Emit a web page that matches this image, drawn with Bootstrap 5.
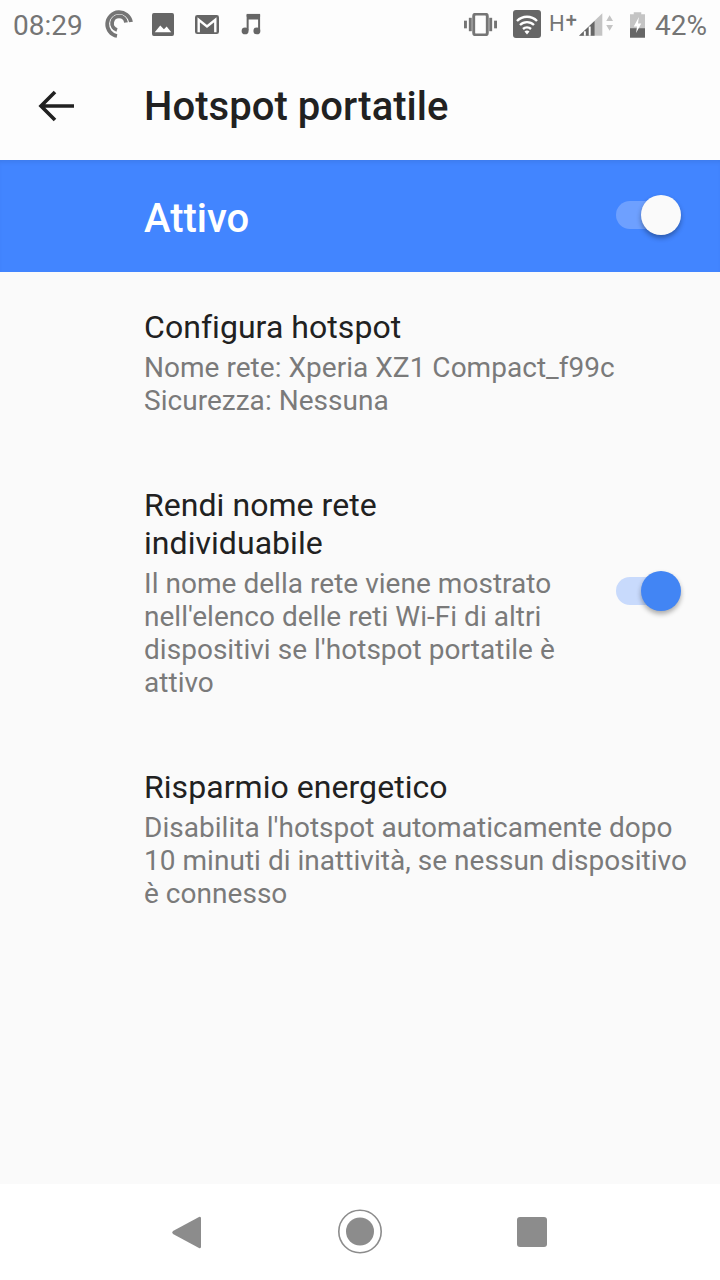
<!DOCTYPE html>
<html lang="it">
<head>
<meta charset="UTF-8">
<meta name="viewport" content="width=device-width, initial-scale=1.0">
<title>Hotspot portatile</title>
<link rel="stylesheet" href="https://cdn.jsdelivr.net/npm/bootstrap@5.3.0/dist/css/bootstrap.min.css">
<style>
body { font-family: Roboto, "Liberation Sans", sans-serif; background: #fafafa; color: #212121; }
.phone { width: 720px; height: 1280px; overflow: hidden; }
.status-bar { height: 52px; background: #fdfdfd; color: #757575; font-size: 28px; padding: 0 13px 4px; }
.status-bar svg { display: block; flex: none; }
.status-text { margin-top: 4px; }
.ic-swirl { margin-left: 22px; }
.ic-image { margin-left: 19px; }
.ic-mail { margin-left: 21px; }
.ic-music { margin-left: 22px; }
.ic-wifi { margin-left: 16px; }
.net-type { margin-left: 8px; font-size: 22px; line-height: 1; width: 25px; }
.net-plus { font-size: 20px; font-weight: 500; position: relative; top: -3px; margin-left: 1px; }
.ic-signal { margin-left: 5px; }
.ic-battery { margin-left: 16px; }
.batt-text { margin-left: 10px; margin-top: 4px; }
.tool-bar { height: 108px; background: #fdfdfd; padding-left: 38px; }
.tool-title { font-size: 40px; font-weight: 500; margin-left: 68px; margin-top: 2px; color: #212121; letter-spacing: .05px; }
.master-bar { height: 112px; background: #4285ff; color: #fff; padding: 0 48px 0 144px; box-shadow: inset 0 4px 4px -2px rgba(0,0,0,.08); }
.master-label { font-size: 40px; font-weight: 500; line-height: 1; margin-top: 6px; }
.switch-track { position: relative; width: 56px; height: 28px; border-radius: 14px; flex: none; }
.switch-thumb { position: absolute; right: -9px; top: -6px; width: 40px; height: 40px; border-radius: 50%; box-shadow: 0 3px 5px rgba(0,0,0,.32); }
.track-on-blue { background: #6ea0ff; margin-top: -1px; margin-bottom: 1px; }
.track-on-light { background: #c8dafc; margin-left: auto; margin-right: 28px; margin-top: -4px; }
.thumb-white { background: #fafafa; }
.thumb-blue { background: #4285f4; }
.pref-list { flex: 1; padding: 36px 20px 0 144px; }
.pref-item { margin-bottom: 69px; }
.pref-text { width: 416px; }
.pref-title { font-size: 32px; line-height: 38px; color: #212121; letter-spacing: .05px; }
.pref-sub { font-size: 28px; line-height: 33px; color: #7a7a7a; margin-top: 5px; letter-spacing: .03px; }
.nav-bottom { height: 96px; background: #fff; }
</style>
</head>
<body>
<div class="phone d-flex flex-column">
  <div class="status-bar d-flex align-items-center">
    <span class="status-text">08:29</span>
    <svg class="ic-swirl" width="28" height="28" viewBox="0 0 28 28" fill="none" stroke="#757575" stroke-width="3.8"><path d="M26 12A12 12 0 1 0 12 26"/><path d="M21 12.5A7 7 0 1 0 12 20"/></svg>
    <svg class="ic-image" width="22" height="23" viewBox="0 0 24 24" preserveAspectRatio="none"><rect width="24" height="24" rx="2" fill="#666"/><path d="M3 20l6-7 4 4 3-3 5 6z" fill="#fff"/></svg>
    <svg class="ic-mail" width="24" height="21" viewBox="0 0 26 22" preserveAspectRatio="none"><rect width="26" height="20" y="1" rx="2.5" fill="#666"/><path d="M4 19V6l9 7 9-7v13" fill="none" stroke="#fff" stroke-width="2.6"/></svg>
    <svg class="ic-music" width="20" height="22" viewBox="0 0 22 24" preserveAspectRatio="none" fill="#666"><circle cx="4.5" cy="19.5" r="3.8"/><circle cx="17.5" cy="19.5" r="3.8"/><path d="M6.2 19V2H21v17h-2.2V7H8.4v12z"/><rect x="6.2" y="1" width="14.8" height="3"/></svg>
    <div class="ms-auto d-flex align-items-center">
      <svg width="33" height="23" viewBox="0 0 34 24" preserveAspectRatio="none" fill="#757575"><rect x="10" y="1.2" width="14" height="21.6" rx="2" fill="none" stroke="#757575" stroke-width="3"/><rect x="0" y="8" width="3" height="8"/><rect x="5" y="5" width="3" height="14"/><rect x="26" y="5" width="3" height="14"/><rect x="31" y="8" width="3" height="8"/></svg>
      <svg class="ic-wifi" width="28" height="28" viewBox="0 0 28 28"><rect width="28" height="28" rx="3" fill="#666"/><path d="M4 11a14 14 0 0 1 20 0M7 15a10 10 0 0 1 14 0M10 19a6 6 0 0 1 8 0" fill="none" stroke="#fff" stroke-width="2.4"/><path d="M11.5 21.5a4 4 0 0 1 5 0L14 24.5z" fill="#fff"/></svg>
      <span class="net-type d-flex">H<span class="net-plus">+</span></span>
      <svg class="ic-signal" width="35" height="24" viewBox="0 0 36 24"><path d="M0 24L24 1v23z" fill="#c4c4c4"/><path d="M0 24L16 9v15z" fill="#666"/><path d="M5 19.5h2V24H5zM10 14.5h2V24h-2z" fill="#fff"/><path d="M28 9l3.5-6 3.5 6zM28 13h7l-3.5 6z" fill="#c4c4c4"/></svg>
      <svg class="ic-battery" width="15" height="27" viewBox="0 0 16 28"><path d="M4 3V1h8v2h4v25H0V3z" fill="#c4c4c4"/><path d="M0 18h16v10H0z" fill="#666"/><path d="M9.5 6L4 16h3.5l-1 7L12 13H8.5z" fill="#fff"/></svg>
      <span class="batt-text">42%</span>
    </div>
  </div>
  <div class="tool-bar d-flex align-items-center">
    <svg width="38" height="32" viewBox="0 0 38 32" fill="none" stroke="#212121" stroke-width="3.6"><path d="M36 16H3M17 2L3 16l14 14"/></svg>
    <div class="tool-title">Hotspot portatile</div>
  </div>
  <div class="master-bar d-flex align-items-center justify-content-between">
    <div class="master-label">Attivo</div>
    <div class="switch-track track-on-blue"><div class="switch-thumb thumb-white"></div></div>
  </div>
  <div class="pref-list">
    <div class="pref-item">
      <div class="pref-title">Configura hotspot</div>
      <div class="pref-sub">Nome rete: Xperia XZ1 Compact_f99c<br>Sicurezza: Nessuna</div>
    </div>
    <div class="pref-item d-flex align-items-center">
      <div class="pref-text">
        <div class="pref-title">Rendi nome rete individuabile</div>
        <div class="pref-sub">Il nome della rete viene mostrato nell'elenco delle reti Wi-Fi di altri dispositivi se l'hotspot portatile è attivo</div>
      </div>
      <div class="switch-track track-on-light"><div class="switch-thumb thumb-blue"></div></div>
    </div>
    <div class="pref-item">
      <div class="pref-title">Risparmio energetico</div>
      <div class="pref-sub">Disabilita l'hotspot automaticamente dopo 10 minuti di inattività, se nessun dispositivo è connesso</div>
    </div>
  </div>
  <div class="nav-bottom d-flex align-items-center">
    <svg width="720" height="96" viewBox="0 0 720 96" fill="#8c8c8c"><path d="M199 33a1.5 1.5 0 0 1 2 1v29a1.5 1.5 0 0 1-2 1l-26-14a2 2 0 0 1 0-3z"/><circle cx="360" cy="47.5" r="21.2" fill="none" stroke="#8c8c8c" stroke-width="1.6"/><circle cx="360" cy="47.5" r="14"/><rect x="517" y="33" width="30" height="30" rx="3"/></svg>
  </div>
</div>
<script src="https://cdn.jsdelivr.net/npm/bootstrap@5.3.0/dist/js/bootstrap.bundle.min.js"></script>
</body>
</html>
